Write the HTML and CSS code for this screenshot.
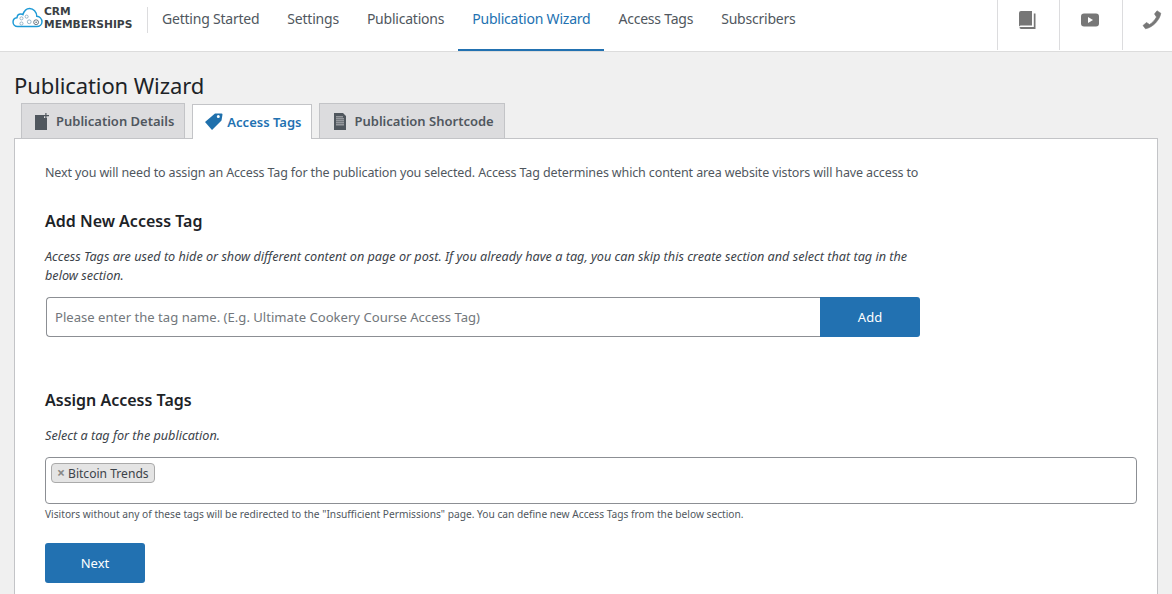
FILE: index.html
```html
<!DOCTYPE html>
<html lang="en">
<head>
    <meta charset="UTF-8">
    <meta name="viewport" content="width=device-width, initial-scale=1.0">
    <title>Publication Wizard</title>
    <link rel="stylesheet" href="styles.css">
</head>
<body>

    <div class="topbar">
        <div class="logo">
            <svg class="logo-cloud" width="31" height="21" viewBox="0 0 36 24" fill="none">
                <path d="M9 22.500H6.500C3.500 22.500 1.200 20.200 1.200 17.300C1.200 14.600 3.200 12.500 5.800 12.200C6 9.700 8 8 10.300 8C11.200 8 12 8.300 12.700 8.700C14 4.200 17 1.500 20.500 1.500C25 1.500 28.500 5.500 28.800 10.500C32 10.800 34.800 13.500 34.800 17C34.800 20.200 32 22.500 28.800 22.500Z" stroke="#1e9ad6" stroke-width="1.700"/>
                <circle cx="11" cy="13" r="1.800" stroke="#7fa3bb" stroke-width=".9"/>
                <circle cx="17" cy="11" r="1.800" stroke="#7fa3bb" stroke-width=".9"/>
                <circle cx="11" cy="19" r="1.800" stroke="#7fa3bb" stroke-width=".9"/>
                <circle cx="20" cy="17" r="2.200" stroke="#7fa3bb" stroke-width=".9"/>
                <circle cx="28" cy="17.500" r="2.800" stroke="#52606b" stroke-width="1"/>
                <circle cx="28" cy="17.500" r=".9" fill="#52606b"/>
            </svg>
            <div class="logo-text">CRM<br>MEMBERSHIPS</div>
        </div>
        <nav class="menu">
            <a href="#">Getting Started</a>
            <a href="#">Settings</a>
            <a href="#">Publications</a>
            <a href="#" class="current">Publication Wizard</a>
            <a href="#">Access Tags</a>
            <a href="#">Subscribers</a>
        </nav>
        <div class="top-icons">
            <a href="#">
                <svg width="17" height="18" viewBox="0 0 17 18"><path d="M0 2A2 2 0 0 1 2 0H13V14.500H2.500A2.500 2.500 0 0 0 0 15.500Z" fill="#777"/><path d="M14.800 2.500H16.500V18H2A2 2 0 0 1 .3 16.500C1 16.100 1.800 16 2.500 16H14.800Z" fill="#777"/></svg>
            </a>
            <a href="#">
                <svg width="18" height="14" viewBox="0 0 18 14"><rect y=".5" width="18" height="13" rx="3" fill="#777"/><path d="M7 4L12 7L7 10Z" fill="#fff"/></svg>
            </a>
            <a href="#">
                <svg width="20" height="20" viewBox="0 0 20 20"><path d="M12.500 4L15 .8L18.800 3.200C18 9.500 11 17.500 3.500 18.800L1 15.500L4.500 12.500L7.500 14.500C10 13 12.800 10.200 14.500 7Z" fill="#777" stroke="#777" stroke-width=".6" stroke-linejoin="round"/></svg>
            </a>
        </div>
    </div>

    <div class="wrap">
        <h1>Publication Wizard</h1>

        <div class="tabs">
            <a href="#" class="tab tab-details">
                <svg width="15" height="17" viewBox="0 0 15 17"><path d="M0 2H9V5H12V17H0Z" fill="#50575e"/><path d="M11.500 0V2H14V3.200H11.500V5H10.300V3.200H9V2H10.300V0Z" fill="#50575e"/></svg>
                Publication Details
            </a>
            <a href="#" class="tab tab-tags active">
                <svg width="18" height="18" viewBox="0 0 18 18"><path d="M0 9L10 .5H16.500Q17.500 .5 17.500 1.500L16.500 7.500L7 17ZM13.300 2A1.500 1.500 0 1 0 13.300 5A1.500 1.500 0 0 0 13.300 2Z" fill="#1f70ac" fill-rule="evenodd"/></svg>
                Access Tags
            </a>
            <a href="#" class="tab tab-short">
                <svg width="12" height="17" viewBox="0 0 12 17"><path d="M0 0H9L12 3V17H0ZM2 3.500V4.300H9V3.500ZM2 5.500V6.300H10V5.500ZM2 7.500V8.300H10V7.500ZM2 9.500V10.300H10V9.500ZM2 11.500V12.300H10V11.500Z" fill="#50575e" fill-rule="evenodd"/></svg>
                Publication Shortcode
            </a>
        </div>

        <div class="panel">
            <p class="intro">Next you will need to assign an Access Tag for the publication you selected. Access Tag determines which content area website vistors will have access to</p>

            <h2>Add New Access Tag</h2>
            <p class="desc">Access Tags are used to hide or show different content on page or post. If you already have a tag, you can skip this create section and select that tag in the below section.</p>
            <div class="add-row">
                <input type="text" placeholder="Please enter the tag name. (E.g. Ultimate Cookery Course Access Tag)">
                <button type="button" class="btn">Add</button>
            </div>

            <h2 class="assign-title">Assign Access Tags</h2>
            <p class="desc select-desc">Select a tag for the publication.</p>
            <div class="tag-box">
                <span class="chip"><span class="chip-x">×</span>Bitcoin Trends</span>
            </div>
            <p class="hint">Visitors without any of these tags will be redirected to the "Insufficient Permissions" page. You can define new Access Tags from the below section.</p>
            <button type="button" class="btn next">Next</button>
        </div>
    </div>

</body>
</html>
```

FILE: styles.css
```css
* {
    box-sizing: border-box;
}

html, body {
    height: 100%;
}

body {
    margin: 0;
    overflow: hidden;
    font-family: "Noto Sans", sans-serif;
    font-size: 13px;
    color: #3c434a;
    background-color: #f0f0f0;
}

a {
    text-decoration: none;
}

.topbar {
    display: flex;
    height: 52px;
    background-color: #fff;
    border-bottom: 1px solid #dcdcdc;
}

.logo {
    display: flex;
    align-items: flex-start;
    gap: 1px;
    width: 148px;
    height: 26px;
    margin-top: 7px;
    padding-left: 12px;
    border-right: 1px solid #dcdcde;
}

.logo-text {
    margin-top: -2px;
    font-family: "DejaVu Sans", sans-serif;
    font-size: 10.700px;
    font-weight: 700;
    line-height: 13px;
    color: #3a3f44;
}

.menu {
    display: flex;
    flex: 1;
}

.menu a {
    height: 51px;
    padding: 9px 14px 0;
    font-size: 14px;
    letter-spacing: -0.220px;
    color: #50575e;
}

.menu a.current {
    color: #2271b1;
    border-bottom: 2px solid #2271b1;
}

.top-icons {
    display: flex;
    flex: 0 0 175px;
    overflow: hidden;
}

.top-icons a {
    display: flex;
    flex: 0 0 62px;
    justify-content: center;
    height: 50px;
    padding: 11px 3px 0 0;
    border-left: 1px solid #dcdcde;
}

.top-icons a:nth-child(2) {
    flex-basis: 63px;
    padding-top: 13px;
}

.top-icons a:nth-child(3) {
    padding-top: 10px;
}

.wrap {
    padding: 0 14px;
}

h1 {
    margin: 18px 0 0;
    font-size: 22px;
    font-weight: 400;
    line-height: 30px;
    letter-spacing: -0.100px;
    color: #1d2327;
}

.tabs {
    display: flex;
    align-items: flex-end;
    height: 38px;
    padding-left: 7px;
}

.tab {
    display: flex;
    align-items: center;
    height: 35px;
    margin-right: 7px;
    font-size: 13px;
    font-weight: 600;
    color: #50575e;
    background-color: #dcdcde;
    border: 1px solid #c3c4c7;
    border-bottom: none;
}

.tab-details {
    gap: 6px;
    padding: 0 10px 0 13px;
}

.tab-tags {
    gap: 4px;
    padding: 0 10px 0 12px;
}

.tab-short {
    gap: 8px;
    padding: 0 10px 0 14px;
}

.tab.active {
    position: relative;
    margin-bottom: -1px;
    color: #2271b1;
    background-color: #fff;
}

.panel {
    height: 460px;
    padding: 24px 30px;
    background-color: #fff;
    border: 1px solid #c3c4c7;
}

.intro {
    margin: 0;
    font-size: 12.500px;
    line-height: 20px;
    letter-spacing: -0.130px;
    color: #50575e;
}

h2 {
    margin: 27px 0 0;
    font-size: 16px;
    font-weight: 600;
    line-height: 22px;
    color: #1d2327;
}

.desc {
    width: 880px;
    margin: 15px 0 0;
    font-size: 12.650px;
    font-style: italic;
    line-height: 19px;
    color: #3c434a;
}

.add-row {
    display: flex;
    width: 874px;
    height: 40px;
    margin: 12px 0 0 1px;
}

.add-row input {
    flex: 1;
    padding: 0 8px;
    font-family: inherit;
    font-size: 13.100px;
    border: 1px solid #8c8f94;
    border-right: none;
    border-radius: 4px 0 0 4px;
}

.add-row input::placeholder {
    color: #72777c;
}

.btn {
    width: 100px;
    height: 40px;
    font-family: inherit;
    font-size: 13px;
    color: #fff;
    background-color: #2271b1;
    border: none;
    border-radius: 3px;
}

.add-row .btn {
    border-radius: 0 3px 3px 0;
}

.assign-title {
    margin-top: 52px;
}

.desc.select-desc {
    margin-top: 15px;
}

.tag-box {
    width: 1092px;
    height: 47px;
    margin-top: 12px;
    padding: 5px;
    border: 1px solid #8c8f94;
    border-radius: 4px;
}

.chip {
    display: inline-block;
    vertical-align: top;
    height: 20px;
    padding: 0 5px;
    font-size: 12.100px;
    line-height: 19px;
    color: #3c434a;
    background-color: #e4e4e4;
    border: 1px solid #aaa;
    border-radius: 4px;
}

.chip-x {
    margin-right: 3px;
    font-size: 14px;
    font-weight: 700;
    line-height: 1;
    color: #888;
}

.hint {
    margin: 1px 0 0;
    font-size: 10.200px;
    line-height: 18px;
    color: #50575e;
}

.next {
    display: block;
    margin-top: 20px;
}
```
